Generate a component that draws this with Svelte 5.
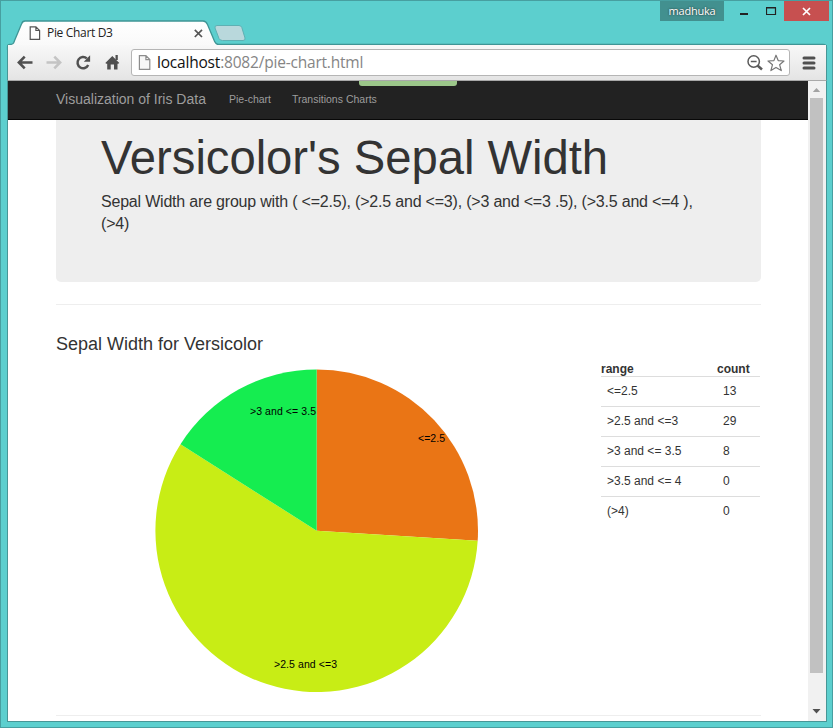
<script>
  const rows = [
    { range: '<=2.5', count: 13 },
    { range: '>2.5 and <=3', count: 29 },
    { range: '>3 and <= 3.5', count: 8 },
    { range: '>3.5 and <= 4', count: 0 },
    { range: '(>4)', count: 0 },
  ];
  const colors = ['#ea7515', '#c8ed15', '#15ed50'];
  const labels = [
    { x: 418, y: 442, w: 27 },
    { x: 274, y: 668, w: 63 },
    { x: 250, y: 415, w: 66 },
  ];
  const cx = 316.7;
  const cy = 530.7;
  const r = 161.3;
  const total = rows.reduce((sum, row) => sum + row.count, 0);

  function point(v) {
    const a = (v / total) * Math.PI * 2;
    return `${cx + r * Math.sin(a)},${cy - r * Math.cos(a)}`;
  }

  let acc = 0;
  const slices = rows.filter((row) => row.count > 0).map((row, i) => {
    const start = acc;
    acc += row.count;
    const large = row.count > total / 2 ? 1 : 0;
    return {
      name: row.range,
      color: colors[i],
      label: labels[i],
      d: `M${cx},${cy}L${point(start)}A${r},${r} 0 ${large} 1 ${point(acc)}Z`,
    };
  });
</script>

<div class="window">
  <header class="titlebar">
    <svg class="tabshape" width="833" height="50" viewBox="0 0 833 50">
      <defs>
        <linearGradient id="tabfill" x1="0" y1="0" x2="0" y2="1">
          <stop offset="0" stop-color="#fff" />
          <stop offset="1" stop-color="#f8f8f8" />
        </linearGradient>
      </defs>
      <path d="M7.500 50V47Q7.500 44.500 10 44.500C13.500 44.500 13.500 43 15 39.500L21.500 24Q22.500 21 25 21H203Q206 21 207.500 24.500L214 40Q215.500 44.500 219 44.500H823Q826.500 44.500 826.500 48V50Z" fill="url(#tabfill)" stroke="#3f9595" stroke-width="1.300" />
      <path d="M217 25.500H239Q241 25.500 241.800 27.500L245 38Q245.500 40.500 243 40.500H222.500Q220 40.500 219 38.500L215 28Q214.500 25.500 217 25.500Z" fill="#b9d8dc" stroke="#5fb0b3" />
    </svg>
    <div class="tab">
      <svg width="12" height="15" viewBox="0 0 12 15" fill="#fff" stroke="#555" stroke-width="1.200"><path d="M1.200.800H6.900L10.600 4.500V13.400H1.200ZM6.900.800V4.500H10.600" /></svg>
      <span class="tabname">Pie Chart D3</span>
      <svg width="9" height="9" viewBox="0 0 9 9" stroke="#555" stroke-width="1.700"><path d="M.8.800 8 8M8 .8.800 8" /></svg>
    </div>
    <div class="controls">
      <span class="user">madhuka</span>
      <svg class="min" width="46" height="20" viewBox="0 0 46 20"><path d="M17 12h8v2h-8z" fill="#222" /></svg>
      <svg width="14" height="20" viewBox="0 0 14 20"><path d="M.5 7h9v6.500h-9zM0 6.500h10" fill="none" stroke="#222" stroke-width="1.200" /></svg>
      <span class="close"><svg width="9" height="9" viewBox="0 0 9 9" stroke="#fff" stroke-width="1.700"><path d="M1 1l7 7M8 1 1 8" /></svg></span>
    </div>
  </header>

  <div class="toolbar">
    <div class="nav">
      <svg width="98" height="18" viewBox="0 0 98 18" fill="none">
        <g stroke="#505050" stroke-width="2.600"><path d="M2 8.500H15.500M7.700 2.700 1.900 8.500 7.700 14.300" /></g>
        <g stroke="#c4c4c4" stroke-width="2.600"><path d="M29.500 8.500H43M37.300 2.700 43.100 8.500 37.300 14.300" /></g>
        <g transform="translate(58.500 .5)"><path d="M12.700 10.500A5.600 5.600 0 1 1 11.300 3.900" stroke="#505050" stroke-width="2.500" /><path d="M14.600.700V7.200H8.300Z" fill="#505050" /></g>
        <g transform="translate(88 .5)" fill="#505050"><path d="M.3 8.500 7.300 1.500 14.300 8.500 13.200 9.300H12.500V15H9V10H5.700V15H2.200V9.300H1.300Z" /><path d="M10.500.500h2.300v5h-2.300z" /></g>
      </svg>
    </div>
    <div class="address">
      <svg width="13" height="17" viewBox="0 0 13 17" fill="#f7f7f7" stroke="#8d8d8d" stroke-width="1.200"><path d="M1.400 1.700H7.900L11.800 5.600V15.300H1.400ZM7.900 1.700V5.600H11.800" /></svg>
      <span class="url"><b>localhost</b>:8082/pie-chart.html</span>
      <svg width="42" height="20" viewBox="0 0 42 20" fill="none">
        <circle cx="7.700" cy="8.500" r="5.700" stroke="#5a5a5a" stroke-width="1.500" /><path d="M4.800 8.500h5.800" stroke="#5a5a5a" stroke-width="1.500" /><path d="M11.500 12.500 16 16.500" stroke="#5a5a5a" stroke-width="2.500" />
        <path d="M30 2.200 32.200 7.600 38 8 33.600 11.700 35.300 17.600 30 14.400 24.900 17.600 26.500 11.700 22 8 27.900 7.600Z" stroke="#777" stroke-width="1.200" stroke-linejoin="round" />
      </svg>
    </div>
    <svg class="menu" width="14" height="14" viewBox="0 0 14 14" stroke="#505050" stroke-width="3" stroke-linecap="round"><path d="M2 2h10M2 7h10M2 12h10" /></svg>
  </div>

  <div class="viewport">
    <main class="page">
      <nav class="navbar">
        <span class="brand">Visualization of Iris Data</span>
        <span class="link one">Pie-chart</span>
        <span class="link two">Transitions Charts</span>
        <i class="bar"></i>
      </nav>
      <section class="jumbotron">
        <h1>Versicolor's Sepal Width</h1>
        <p>Sepal Width are group with ( &lt;=2.5), (&gt;2.5 and &lt;=3), (&gt;3 and &lt;=3 .5), (&gt;3.5 and &lt;=4 ),<br />(&gt;4)</p>
      </section>
      <hr />
      <h2>Sepal Width for Versicolor</h2>
      <div class="content">
        <svg class="pie" width="545" height="354" viewBox="56 361 545 354">
          {#each slices as s}
            <path d={s.d} fill={s.color} />
          {/each}
          {#each slices as s}
            <text x={s.label.x} y={s.label.y} textLength={s.label.w}>{s.name}</text>
          {/each}
        </svg>
        <table>
          <thead><tr><th class="range">range</th><th>count</th></tr></thead>
          <tbody>
            {#each rows as row}
              <tr><td>{row.range}</td><td>{row.count}</td></tr>
            {/each}
          </tbody>
        </table>
      </div>
      <hr class="last" />
    </main>
    <aside class="scrollbar">
      <svg width="18" height="17" viewBox="0 0 18 17"><path d="M4.800 11 8.500 7 12.200 11Z" fill="#a3a3a3" /></svg>
      <div class="thumb"></div>
      <svg width="18" height="17" viewBox="0 0 18 17"><path d="M4.500 7h8L8.500 11.500Z" fill="#505050" /></svg>
    </aside>
  </div>
</div>

<style>
  :global(body) { margin: 0; overflow: hidden; }
  .window {
    width: 833px; height: 728px; box-sizing: border-box; position: relative;
    background: #5ccfce; border: 1px solid #479fa0; padding: 0 5px 6px 6px;
    display: flex; flex-direction: column;
    font-family: 'Liberation Sans', Arial, sans-serif; color: #333;
  }
  .titlebar { height: 44px; display: flex; justify-content: space-between; flex: none; }
  .tabshape { position: absolute; left: -1px; top: -1px; }
  .tab { position: relative; margin: 24px 0 0 22px; height: 16px; width: 174px; display: flex; align-items: center; }
  .tabname { flex: 1; margin-left: 6px; font: 12px/16px 'Open Sans', 'Noto Sans', sans-serif; letter-spacing: -.33px; color: #222; white-space: nowrap; }
  .controls { position: relative; display: flex; height: 20px; margin-right: -2px; }
  .user { width: 64px; background: #42908f; color: #fff; font: 11px/20px 'Open Sans', sans-serif; letter-spacing: -.2px; text-align: center; text-shadow: 0 0 2px #222; margin-right: -1px; }
  .min { margin-right: -3px; }
  .close { width: 45px; margin-left: 4px; background: #c75050; display: flex; align-items: center; justify-content: center; }
  .toolbar {
    position: relative; height: 36px; box-sizing: border-box; padding: 4px 10px 0 11px;
    border: 1px solid #479696; border-top: 0; border-bottom-color: #a9a9a9;
    background: linear-gradient(#f8f8f8, #e4e4e4); display: flex; flex: none;
  }
  .nav { width: 113px; display: flex; padding-top: 5px; box-sizing: border-box; margin-right: -1px; }
  .nav svg { overflow: visible; margin-left: -2px; }
  .address {
    width: 659px; height: 27px; box-sizing: border-box; border: 1px solid #b5b5b5; border-radius: 3px;
    background: #fff; display: flex; align-items: center; padding: 0 1px 0 6px; flex: none;
  }
  .url { flex: 1; margin: -2px 0 0 6px; font: 15.500px/24px 'Open Sans', 'Noto Sans', sans-serif; letter-spacing: -.2px; color: #858585; white-space: nowrap; }
  .url b { font-weight: 400; color: #111; }
  .menu { margin: 7px 0 0 12px; flex: none; }
  .viewport { height: 641px; display: flex; position: relative; border: 1px solid #479696; border-top: 0; box-sizing: border-box; background: #fff; flex: none; }
  .page { width: 800px; flex: none; overflow: hidden; }
  .navbar { position: relative; height: 39px; box-sizing: border-box; background: #222; border-bottom: 1px solid #080808; padding-left: 48px; display: flex; color: #9d9d9d; line-height: 37px; white-space: nowrap; }
  .brand { font-size: 14px; width: 173px; }
  .link { font-size: 10.500px; }
  .one { width: 63px; }
  .bar { position: absolute; left: 351px; top: 0; width: 98px; height: 5px; background: #9cc78a; border-radius: 0 0 3px 3px; }
  .jumbotron { margin-left: 48px; width: 705px; height: 162px; box-sizing: border-box; padding: 12px 0 0 45px; background: #eee; border-radius: 0 0 5px 5px; }
  h1 { margin: 0; font-size: 47.250px; line-height: 52px; letter-spacing: -.04px; font-weight: 400; white-space: nowrap; }
  p { margin: 7px 0 0; font-size: 16px; line-height: 22px; letter-spacing: -.2px; white-space: nowrap; }
  hr { width: 705px; margin: 22px 0 0 48px; border: 0; border-top: 1px solid #eee; }
  h2 { margin: 29px 0 0 48px; font-size: 18px; line-height: 20px; font-weight: 400; }
  .content { display: flex; margin: 7px 0 0 48px; height: 354px; align-items: flex-start; }
  .pie { flex: none; }
  .pie text { font-size: 10.500px; fill: #000; }
  table { width: 159px; border-collapse: collapse; font-size: 12px; line-height: 15px; table-layout: fixed; }
  th { text-align: left; padding: 1px 0 0; height: 14px; line-height: 14px; }
  .range { width: 116px; }
  td { border-top: 1px solid #ddd; height: 30px; padding: 0 6px; box-sizing: border-box; white-space: nowrap; }
  hr.last { margin-top: 0; }
  .scrollbar { width: 18px; background: #f1f1f1; display: flex; flex-direction: column; }
  .scrollbar svg { flex: none; }
  .thumb { width: 13px; height: 575px; margin: 0 0 29px 2px; background: #c1c1c1; flex: none; }
</style>
